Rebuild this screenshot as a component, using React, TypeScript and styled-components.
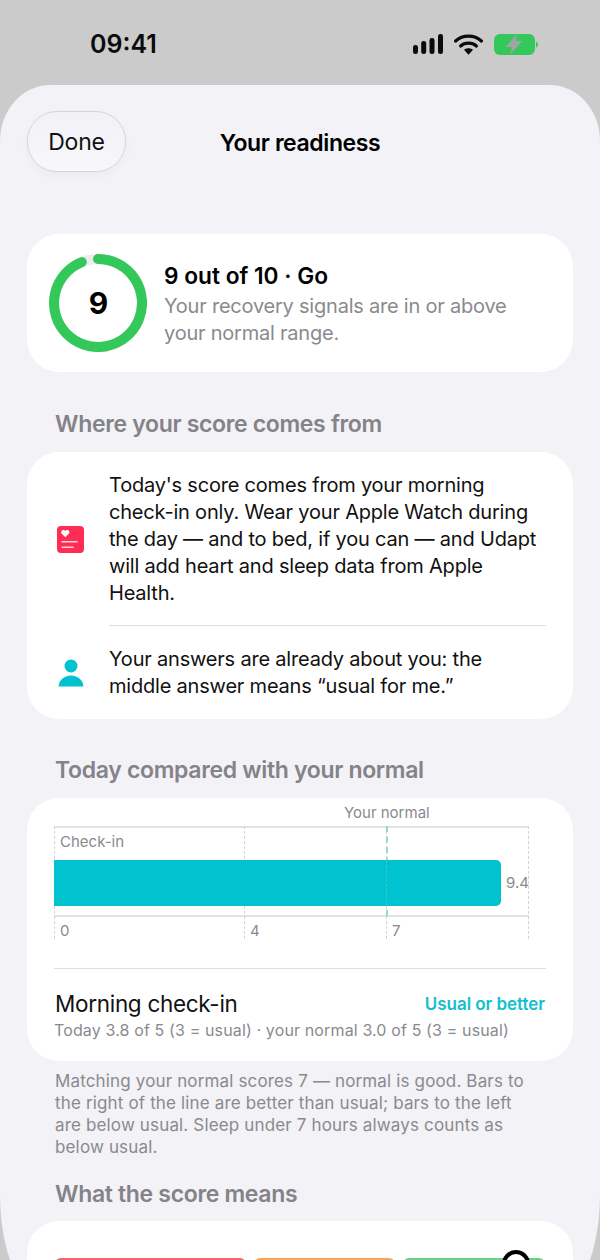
import styled, { createGlobalStyle } from 'styled-components';

const GlobalStyle = createGlobalStyle`
  html, body {
    margin: 0;
    padding: 0;
    background: #cbcbcb;
  }
  body {
    font-family: Inter, "Liberation Sans", sans-serif;
  }
`;

const Screen = styled.div`
  width: 600px;
  height: 1260px;
  overflow: hidden;
  display: flex;
  flex-direction: column;
  background: #cbcbcb;
`;

const StatusBar = styled.div`
  height: 85px;
  flex-shrink: 0;
  display: flex;
  align-items: flex-start;
  justify-content: space-between;
  padding: 29px 62px 0 90px;
  box-sizing: border-box;
`;

const Clock = styled.div`
  font-size: 25px;
  line-height: 30px;
  font-weight: 600;
  color: #0b0b0b;
`;

const StatusIcons = styled.div`
  display: flex;
  align-items: center;
  gap: 11px;
  height: 30px;
`;

// runs past the bottom of the window, only the start of its lower corners shows
const Sheet = styled.div`
  height: 1214px;
  flex-shrink: 0;
  background: #f2f2f7;
  border-radius: 50px 50px 46px 46px / 56px 56px 104px 104px;
  padding: 0 27px;
  box-sizing: border-box;
  overflow: hidden;
`;

const NavBar = styled.div`
  position: relative;
  height: 149px;
  display: flex;
  justify-content: center;
  padding-top: 43px;
  box-sizing: border-box;
`;

const DoneButton = styled.div`
  position: absolute;
  left: 0;
  top: 26px;
  width: 99px;
  height: 61px;
  box-sizing: border-box;
  border: 1px solid #d4d4da;
  border-radius: 30px;
  background: linear-gradient(#f1f1f6, #f8f8fb);
  box-shadow: 0 4px 10px rgba(0, 0, 0, 0.03);
  display: flex;
  align-items: center;
  justify-content: center;
  font-size: 23px;
  letter-spacing: -0.2px;
  color: #111;
`;

const NavTitle = styled.div`
  font-size: 23px;
  line-height: 30px;
  font-weight: 600;
  letter-spacing: -0.4px;
  color: #000;
`;

const Card = styled.div`
  background: #fff;
  border-radius: 32px;
`;

const ScoreCard = styled(Card)`
  height: 138px;
  display: flex;
  align-items: center;
  gap: 17px;
  padding-left: 22px;
`;

const Ring = styled.div`
  position: relative;
  width: 98px;
  height: 98px;
  flex-shrink: 0;
  svg {
    display: block;
  }
`;

const RingValue = styled.div`
  position: absolute;
  inset: 0 0 1px 1px;
  display: flex;
  align-items: center;
  justify-content: center;
  font-size: 30px;
  font-weight: 700;
  color: #000;
`;

const ScoreText = styled.div`
  display: flex;
  flex-direction: column;
  padding-top: 2px;
`;

const ScoreTitle = styled.div`
  font-size: 22.7px;
  line-height: 30px;
  font-weight: 600;
  color: #000;
  margin-bottom: 2px;
`;

const ScoreBody = styled.div`
  font-size: 20px;
  line-height: 27px;
  letter-spacing: -0.22px;
  color: #8a8a8e;
`;

const SectionTitle = styled.div<{ $top: number; $bottom: number }>`
  font-size: 23px;
  line-height: 28px;
  font-weight: 560;
  letter-spacing: -0.33px;
  color: #838388;
  padding: ${(p) => p.$top}px 0 ${(p) => p.$bottom}px 28px;
`;

const InfoCard = styled(Card)`
  height: 267px;
  padding: 20px 27px 0 30px;
  box-sizing: border-box;
`;

const InfoRow = styled.div`
  display: flex;
  align-items: center;
  gap: 25px;
`;

const InfoIcon = styled.div`
  width: 27px;
  flex-shrink: 0;
  display: flex;
  justify-content: center;
  svg {
    display: block;
  }
`;

const InfoText = styled.div`
  flex: 1;
  font-size: 20px;
  line-height: 27px;
  letter-spacing: -0.2px;
  color: #111;
`;

const InfoDivider = styled.div`
  height: 1px;
  margin: 18px 0 20px 52px;
  background: #dedee0;
`;

const ChartCard = styled(Card)`
  height: 263px;
  padding: 0 27px;
  box-sizing: border-box;
`;

const Chart = styled.div`
  position: relative;
  height: 170px;
`;

const NormalLabel = styled.div`
  position: absolute;
  left: 290px;
  top: 6px;
  font-size: 15px;
  line-height: 18px;
  color: #8a8a8e;
`;

const Plot = styled.div`
  position: absolute;
  left: 0;
  top: 28px;
  width: 475px;
  height: 91px;
  border-top: 2px solid #e2e2e4;
  border-bottom: 2px solid #e2e2e4;
  box-sizing: border-box;
`;

const GridLine = styled.div<{ $x: number; $accent?: boolean }>`
  position: absolute;
  left: ${(p) => p.$x}px;
  top: 28px;
  height: ${(p) => (p.$accent ? 90 : 113)}px;
  border-left: ${(p) => (p.$accent ? '2px dashed #8fdccf' : '1px dashed #d4d4d6')};
`;

const PlotLabel = styled.div`
  position: absolute;
  left: 6px;
  top: 34px;
  font-size: 15px;
  line-height: 20px;
  color: #8a8a8e;
`;

const Bar = styled.div`
  position: absolute;
  left: 0;
  top: 62px;
  width: 447px;
  height: 46px;
  background: #00c3cf;
  border-radius: 0 5px 5px 0;
`;

const AccentOverBar = styled.div`
  position: absolute;
  left: 332px;
  top: 62px;
  height: 46px;
  border-left: 1px dashed #35ccc6;
`;

const BarValue = styled.div`
  position: absolute;
  left: 452px;
  top: 75px;
  font-size: 15px;
  line-height: 20px;
  color: #8a8a8e;
`;

const Tick = styled.div<{ $x: number }>`
  position: absolute;
  left: ${(p) => p.$x}px;
  top: 123px;
  font-size: 15px;
  line-height: 20px;
  color: #8a8a8e;
`;

const MetricBlock = styled.div`
  border-top: 1px solid #dedee0;
  padding-top: 21px;
`;

const MetricHead = styled.div`
  display: flex;
  align-items: center;
  justify-content: space-between;
`;

const MetricName = styled.div`
  font-size: 22.5px;
  line-height: 28px;
  letter-spacing: -0.3px;
  padding-left: 1px;
  color: #111;
`;

const MetricStatus = styled.div`
  font-size: 17px;
  line-height: 24px;
  font-weight: 600;
  letter-spacing: -0.05px;
  padding-right: 1px;
  color: #12bfcc;
`;

const MetricDetail = styled.div`
  font-size: 16px;
  line-height: 22px;
  letter-spacing: 0.13px;
  margin-top: 1px;
  color: #8a8a8e;
`;

const Footnote = styled.div`
  font-size: 17px;
  line-height: 22px;
  letter-spacing: 0.15px;
  color: #8a8a8e;
  padding: 9px 38px 0 28px;
`;

const ScaleCard = styled(Card)`
  height: 80px;
  position: relative;
  display: flex;
  gap: 8px;
  padding: 37px 27px 0 28px;
  box-sizing: border-box;
`;

const ScaleSegment = styled.div<{ $color: string; $width: number }>`
  width: ${(p) => p.$width}px;
  height: 30px;
  border-radius: 6px;
  background: ${(p) => p.$color};
`;

const ScaleMarker = styled.div`
  position: absolute;
  left: 475px;
  top: 29px;
  width: 28px;
  height: 28px;
  box-sizing: border-box;
  border: 4px solid #000;
  border-radius: 50%;
  background: #fff;
`;

const SignalIcon = () => (
  <svg width="30" height="20" viewBox="0 0 30 20">
    <rect x="0" y="11" width="5" height="9" rx="2.3" fill="#0b0b0b" />
    <rect x="8.2" y="7" width="5" height="13" rx="2.3" fill="#0b0b0b" />
    <rect x="16.5" y="4" width="5" height="16" rx="2.3" fill="#0b0b0b" />
    <rect x="25" y="0" width="5" height="20" rx="2.3" fill="#0b0b0b" />
  </svg>
);

const WifiIcon = () => (
  <svg width="29" height="21" viewBox="0 0 29 21" fill="none">
    <path d="M1.6 7C8.7 0.6 20.3 0.6 27.4 7" stroke="#0b0b0b" strokeWidth="3.2" strokeLinecap="round" />
    <path d="M6.6 12C10.9 8.2 18.1 8.2 22.4 12" stroke="#0b0b0b" strokeWidth="3.2" strokeLinecap="round" />
    <path d="M10 15.8C12.4 13.8 16.6 13.8 19 15.8L14.5 20.8Z" fill="#0b0b0b" />
  </svg>
);

const BatteryIcon = () => (
  <svg width="44" height="21" viewBox="0 0 44 21">
    <rect x="0" y="0" width="41" height="21" rx="6" fill="#34c759" />
    <path d="M42 7.4C43.2 7.9 44 9 44 10.5C44 12 43.2 13.1 42 13.6Z" fill="#34c759" />
    <path d="M22.7 0L11.7 13H18L16 20.8L28.3 7H21.7Z" fill="#a3a3a3" />
  </svg>
);

const ScoreRing = () => (
  <svg width="98" height="98" viewBox="0 0 98 98" fill="none">
    <circle cx="49" cy="49" r="44" stroke="#ececee" strokeWidth="10" />
    <path d="M49 5A44 44 0 1 1 32.8 8.1" stroke="#34c759" strokeWidth="10" strokeLinecap="round" />
  </svg>
);

const HealthIcon = () => (
  <svg width="27" height="27" viewBox="0 0 27 27">
    <rect width="27" height="27" rx="4" fill="#ff2d55" />
    <path
      d="M8.3 11.2L4.8 7.7C3.6 6.4 4.4 4 6.4 4C7.3 4 7.9 4.4 8.3 5.1C8.7 4.4 9.3 4 10.2 4C12.2 4 13 6.4 11.8 7.7Z"
      fill="#fff"
    />
    <rect x="4.3" y="15" width="16.5" height="1.5" rx="0.75" fill="#ffd3dc" />
    <rect x="4.3" y="20.4" width="12.5" height="1.5" rx="0.75" fill="#ffd3dc" />
  </svg>
);

const PersonIcon = () => (
  <svg width="26" height="28" viewBox="0 0 26 28">
    <circle cx="13" cy="7" r="6.5" fill="#00c3cf" />
    <path d="M0.6 27.6C0.6 21.6 6 16.5 13 16.5C20 16.5 25.4 21.6 25.4 27.6Z" fill="#00c3cf" />
  </svg>
);

export default function App() {
  return (
    <Screen>
      <GlobalStyle />
      <StatusBar>
        <Clock>09:41</Clock>
        <StatusIcons>
          <SignalIcon />
          <WifiIcon />
          <BatteryIcon />
        </StatusIcons>
      </StatusBar>
      <Sheet>
        <NavBar>
          <DoneButton>Done</DoneButton>
          <NavTitle>Your readiness</NavTitle>
        </NavBar>
        <ScoreCard>
          <Ring>
            <ScoreRing />
            <RingValue>9</RingValue>
          </Ring>
          <ScoreText>
            <ScoreTitle>9 out of 10 · Go</ScoreTitle>
            <ScoreBody>
              Your recovery signals are in or above
              <br />
              your normal range.
            </ScoreBody>
          </ScoreText>
        </ScoreCard>
        <SectionTitle $top={38} $bottom={14}>Where your score comes from</SectionTitle>
        <InfoCard>
          <InfoRow>
            <InfoIcon>
              <HealthIcon />
            </InfoIcon>
            <InfoText>
              Today's score comes from your morning check-in only. Wear your Apple Watch during
              the day — and to bed, if you can — and Udapt will add heart and sleep data from
              Apple Health.
            </InfoText>
          </InfoRow>
          <InfoDivider />
          <InfoRow>
            <InfoIcon>
              <PersonIcon />
            </InfoIcon>
            <InfoText>
              Your answers are already about you: the middle answer means “usual for me.”
            </InfoText>
          </InfoRow>
        </InfoCard>
        <SectionTitle $top={37} $bottom={14}>Today compared with your normal</SectionTitle>
        <ChartCard>
          <Chart>
            <NormalLabel>Your normal</NormalLabel>
            <Plot />
            <GridLine $x={0} />
            <GridLine $x={190} />
            <GridLine $x={332} />
            <GridLine $x={332} $accent />
            <GridLine $x={474} />
            <PlotLabel>Check-in</PlotLabel>
            <Bar />
            <AccentOverBar />
            <BarValue>9.4</BarValue>
            <Tick $x={6}>0</Tick>
            <Tick $x={196}>4</Tick>
            <Tick $x={338}>7</Tick>
          </Chart>
          <MetricBlock>
            <MetricHead>
              <MetricName>Morning check-in</MetricName>
              <MetricStatus>Usual or better</MetricStatus>
            </MetricHead>
            <MetricDetail>Today 3.8 of 5 (3 = usual) · your normal 3.0 of 5 (3 = usual)</MetricDetail>
          </MetricBlock>
        </ChartCard>
        <Footnote>
          Matching your normal scores 7 — normal is good. Bars to the right of the line are better
          than usual; bars to the left are below usual. Sleep under 7 hours always counts as below
          usual.
        </Footnote>
        <SectionTitle $top={22} $bottom={13}>What the score means</SectionTitle>
        <ScaleCard>
          <ScaleSegment $color="#f0686e" $width={191} />
          <ScaleSegment $color="#f5a65b" $width={141} />
          <ScaleSegment $color="#6fcf87" $width={142} />
          <ScaleMarker />
        </ScaleCard>
      </Sheet>
    </Screen>
  );
}
